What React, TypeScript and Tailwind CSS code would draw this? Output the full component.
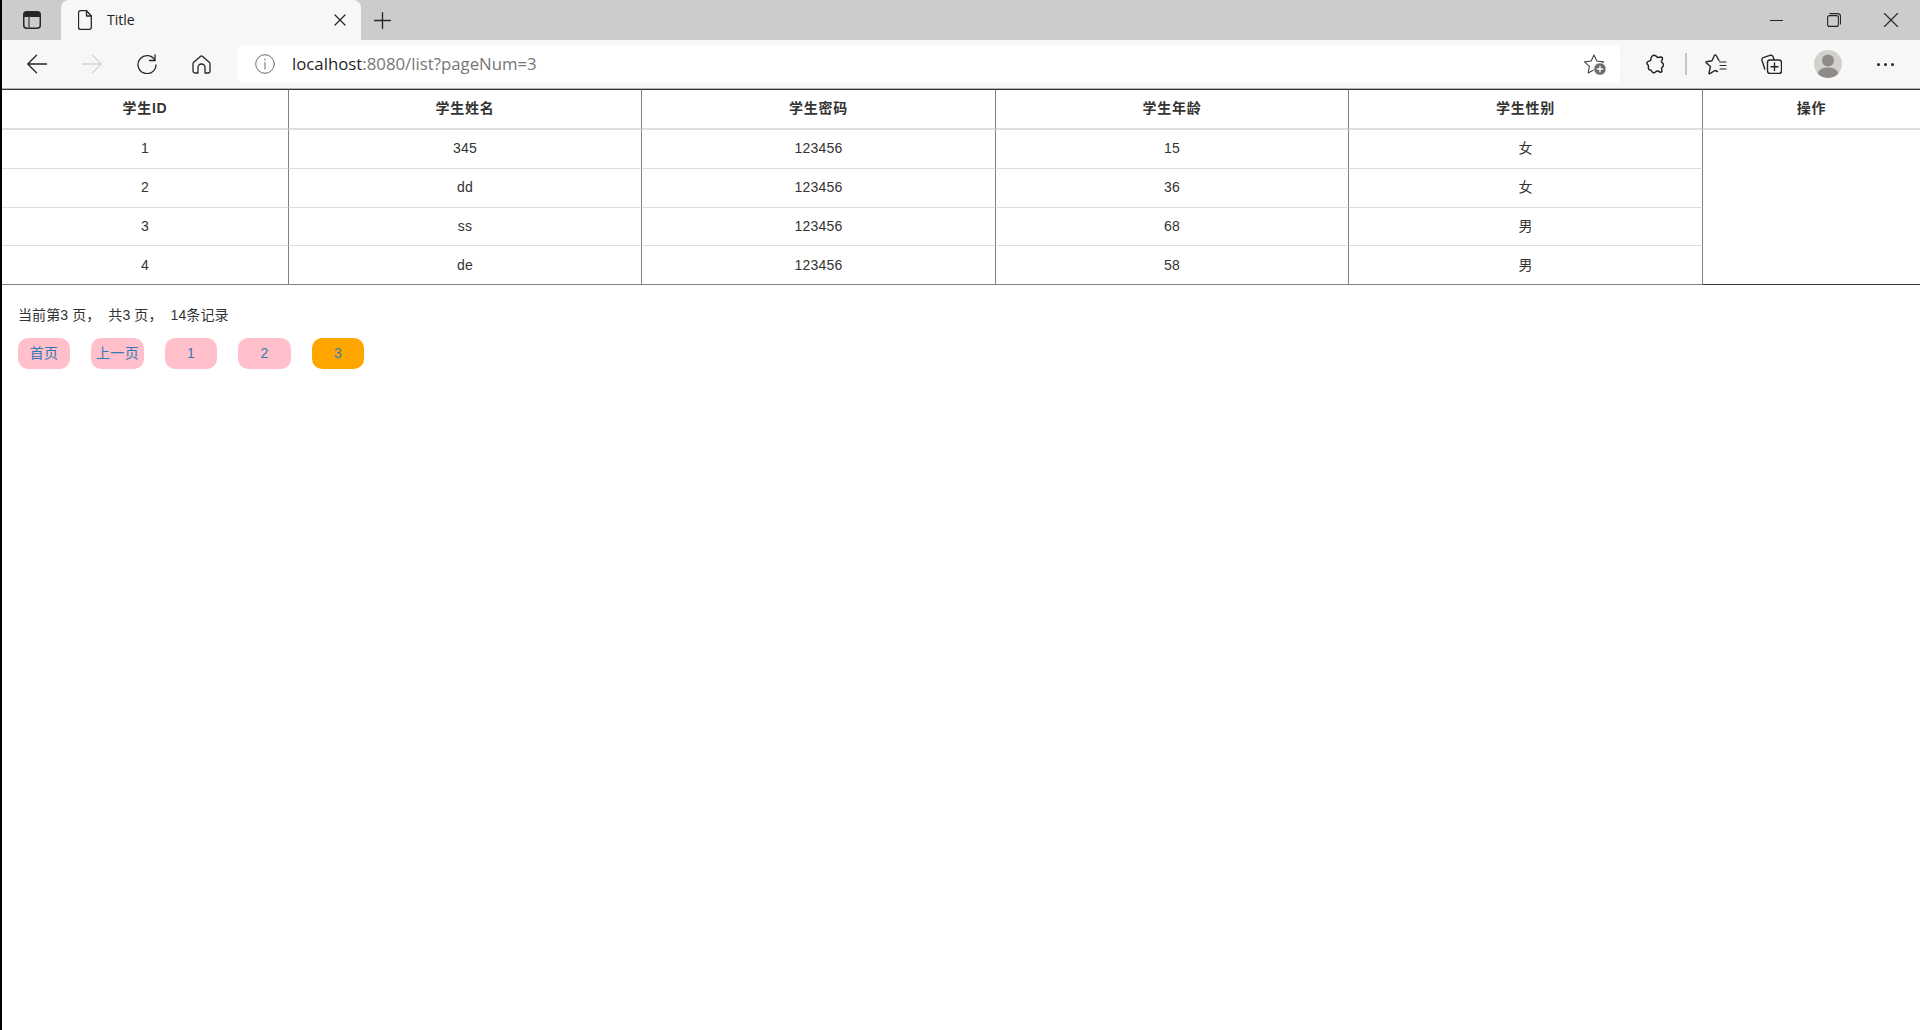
import React from 'react';
import { Plus, X } from 'lucide-react';

const FONT = 'font-["Liberation_Sans","Noto_Sans_CJK_SC",sans-serif]';
const INK = '#262626';

interface Student {
  id: number;
  name: string;
  password: string;
  age: number;
  gender: string;
}

const students: Student[] = [
  { id: 1, name: '345', password: '123456', age: 15, gender: '女' },
  { id: 2, name: 'dd', password: '123456', age: 36, gender: '女' },
  { id: 3, name: 'ss', password: '123456', age: 68, gender: '男' },
  { id: 4, name: 'de', password: '123456', age: 58, gender: '男' },
];

const rowHeights = ['h-[39px] pb-[2px]', 'h-[39px] pb-[2px]', 'h-[38px]', 'h-[39px]'];

const headers = ['学生ID', '学生姓名', '学生密码', '学生年龄', '学生性别'];

const pages = [
  { label: '首页', width: 'w-[52px]', active: false },
  { label: '上一页', width: 'w-[53px]', active: false },
  { label: '1', width: 'w-[52px]', active: false },
  { label: '2', width: 'w-[53px]', active: false },
  { label: '3', width: 'w-[52px]', active: true },
];

const ToolButton: React.FC<{ className: string; children: React.ReactNode }> = ({ className, children }) => (
  <div className={`flex h-full shrink-0 items-center justify-center ${className}`}>{children}</div>
);

// viewBox is in real pixels, so paths can be read straight off the screenshot
const Icon: React.FC<{ w: number; h: number; color?: string; stroke?: number; children: React.ReactNode }> = ({
  w,
  h,
  color = INK,
  stroke = 1.3,
  children,
}) => (
  <svg
    width={w}
    height={h}
    viewBox={`0 0 ${w} ${h}`}
    fill="none"
    stroke={color}
    strokeWidth={stroke}
    strokeLinecap="round"
    strokeLinejoin="round"
  >
    {children}
  </svg>
);

const BrowserChrome: React.FC = () => (
  <div className="font-['Open_Sans',sans-serif]">
    <div className="flex h-[40px] items-end bg-[#cccccc]">
      <ToolButton className="w-[59px]">
        <Icon w={18} h={18} stroke={1.5}>
          <rect x="0.75" y="0.75" width="16.5" height="16.5" rx="3" />
          <path d="M1 2.5a2 2 0 0 1 2-2h12a2 2 0 0 1 2 2V6H1z" fill={INK} stroke="none" />
          <path d="M6 6v11" stroke="#555" />
        </Icon>
      </ToolButton>
      <div className="flex h-[40px] w-[300px] items-center rounded-t-[8px] bg-[#f7f7f7] pr-[11px] pl-[17px]">
        <Icon w={14} h={20}>
          <path d="M2.500 0.700h6l4.800 5.300v11.300a2 2 0 0 1-2 2h-8.800a2 2 0 0 1-2-2V2.700a2 2 0 0 1 2-2z" />
          <path d="M8.500 0.700v5.300h4.800" />
        </Icon>
        <span className="ml-[15px] flex-1 pb-[2px] text-[14px] text-[#222]">Title</span>
        <X size={20} strokeWidth={1.5} color={INK} />
      </div>
      <ToolButton className="w-[43px]">
        <Plus size={27} strokeWidth={1.2} color={INK} />
      </ToolButton>
      <div className="flex-1" />
      <ToolButton className="w-[57px]">
        <div className="h-px w-[13px] bg-[#262626]" />
      </ToolButton>
      <ToolButton className="w-[57px]">
        <Icon w={14} h={14} stroke={1.1}>
          <rect x="0.600" y="2.600" width="10.800" height="10.800" rx="2" />
          <path d="M3 0.600h7.500a3 3 0 0 1 3 3V11" />
        </Icon>
      </ToolButton>
      <ToolButton className="w-[58px]">
        <X size={26} strokeWidth={1} color={INK} />
      </ToolButton>
    </div>
    <div className="flex h-[49px] items-center border-b border-[#b5b5b5] bg-[#f7f7f7] pl-[7px]">
      <ToolButton className="w-[55px]">
        <Icon w={20} h={20}>
          <path d="M19.500 10H1M9.500 1.200 0.800 10l8.700 8.800" />
        </Icon>
      </ToolButton>
      <ToolButton className="w-[55px]">
        <Icon w={20} h={20} color="#d4d4d4">
          <path d="M0.500 10H19M10.500 1.200 19.200 10l-8.700 8.800" />
        </Icon>
      </ToolButton>
      <ToolButton className="w-[55px]">
        <Icon w={20} h={20}>
          <path d="M18 6.500A9 9 0 1 0 19 11" />
          <path d="M18 1v5.500h-5.500" />
        </Icon>
      </ToolButton>
      <ToolButton className="w-[55px]">
        <Icon w={19} h={19}>
          <path d="M8.700 1.300a1.200 1.200 0 0 1 1.600 0l7 6a2 2 0 0 1 .7 1.500V16a2 2 0 0 1-2 2H13v-5.500a3.500 3.500 0 0 0-7 0V18H3a2 2 0 0 1-2-2V8.800a2 2 0 0 1 .7-1.500z" />
        </Icon>
      </ToolButton>
      <div className="ml-[8px] flex h-[38px] w-[1383px] items-center rounded-[6px] bg-white pr-[13px] pl-[18px]">
        <Icon w={20} h={20} color="#6a6a6a" stroke={1}>
          <circle cx="10" cy="10" r="9.300" />
          <path d="M10 8.500v6.500M10 5v1" />
        </Icon>
        <span className="ml-[17px] flex-1 text-[16.8px] text-[#1f1f1f]">
          localhost<span className="text-[#767676]">:8080/list?pageNum=3</span>
        </span>
        <Icon w={23} h={21} color="#444" stroke={1.1}>
          <path d="M10 1l2.800 6 6.700.9-4.900 4.500 1.200 6.600-5.800-3.300-5.800 3.300 1.200-6.600L0.500 7.900 7.200 7z" />
          <circle cx="16" cy="15" r="6.200" fill="#6a6a6a" stroke="#fff" strokeWidth="0.800" />
          <path d="M16 12.300v5.400M13.300 15h5.400" stroke="#fff" strokeWidth="1.400" />
        </Icon>
      </div>
      <ToolButton className="ml-[7px] w-[56px]">
        <Icon w={18} h={20} stroke={1.5}>
          <path d="M5 5C5 2.500 7 .8 9 1.500 10.500 2 11 3 11.500 3.500L15 3C16 3 16.500 4 16.500 5L15.500 7C15 8.500 17.500 9 17.500 11 17.500 13 15.500 13 15.500 14.500L16 17C16 18 15 18.500 14 18L11.500 17C10 16.500 9.500 19 7.500 18.800 5.500 18.600 6 16 4.500 16L3 15.500C2 15 2.500 13 2.500 12 2.500 11 .8 10.500 .8 9 .8 7.500 2.500 7.300 3.500 7 4.500 6.700 5 6 5 5Z" />
        </Icon>
      </ToolButton>
      <div className="ml-[2px] h-[22px] w-[2px] shrink-0 bg-[#c4c4c4]" />
      <ToolButton className="w-[58px]">
        <Icon w={22} h={21} stroke={1.4}>
          <path d="M14 6.500 11.200 1.500a1 1 0 0 0-1.800 0L7 6.800 1.500 7.700a.6.6 0 0 0-.3 1L5.500 12.500 4 19a.6.6 0 0 0 .9.600L10 16.500l2.500 1" />
          <path d="M14.500 8H21M15 11.500h6M15 15h6" strokeWidth="1.200" />
        </Icon>
      </ToolButton>
      <ToolButton className="w-[52px]">
        <Icon w={21} h={20} stroke={1.4}>
          <rect x="6.500" y="6" width="14" height="13.500" rx="2.500" />
          <path d="M13.500 9v7.500M10 12.750h7" />
          <path d="M3.800 15 1 6.500C.6 5 1.400 3.800 2.800 3.400L9 1.300C10.500.9 11.600 1.500 12.200 3L13 5.500" />
        </Icon>
      </ToolButton>
      <ToolButton className="w-[62px]">
        <div className="h-[28px] w-[28px] overflow-hidden rounded-full bg-[#d3d1cd]">
          <svg width="28" height="28" viewBox="0 0 28 28" fill="#8e8a86">
            <circle cx="14" cy="10.500" r="6" />
            <path d="M3.500 25c0-5 4.500-7.500 10.500-7.500s10.500 2.500 10.500 7.500c-2.500 2-6 3-10.500 3s-8-1-10.500-3z" />
          </svg>
        </div>
      </ToolButton>
      <ToolButton className="w-[52px] gap-[4px]">
        <div className="h-[3px] w-[3px] rounded-full bg-[#262626]" />
        <div className="h-[3px] w-[3px] rounded-full bg-[#262626]" />
        <div className="h-[3px] w-[3px] rounded-full bg-[#262626]" />
      </ToolButton>
    </div>
  </div>
);

const StudentTable: React.FC = () => (
  <table className="w-full table-fixed border-separate border-spacing-0 text-center text-[14px] tracking-[0.2px] text-[#333333]">
    <colgroup>
      <col className="w-[287px]" />
      <col className="w-[353px]" />
      <col className="w-[354px]" />
      <col className="w-[353px]" />
      <col className="w-[354px]" />
      <col />
    </colgroup>
    <thead>
      <tr className="h-[41px]">
        {headers.map((h) => (
          <th
            key={h}
            className="border-t border-r border-b-2 border-t-[#333333] border-r-[#808080] border-b-[#dddddd] pb-[2px] font-bold tracking-[0.7px]"
          >
            {h}
          </th>
        ))}
        <th className="border-t border-b-2 border-t-[#333333] border-b-[#dddddd] pb-[2px] font-bold tracking-[0.7px]">操作</th>
      </tr>
    </thead>
    <tbody>
      {students.map((s, i) => {
        const line = i === students.length - 1 ? 'border-b-[#808080]' : 'border-b-[#dddddd]';
        const cell = `border-r border-b border-r-[#808080] ${line} ${rowHeights[i]}`;
        return (
          <tr key={s.id}>
            <td className={cell}>{s.id}</td>
            <td className={cell}>{s.name}</td>
            <td className={cell}>{s.password}</td>
            <td className={cell}>{s.age}</td>
            <td className={cell}>{s.gender}</td>
            {i === 0 && <td rowSpan={4} className="border-b border-b-[#333333]" />}
          </tr>
        );
      })}
    </tbody>
  </table>
);

const Pagination: React.FC = () => (
  <div className="pt-[20px] pl-[16px] text-[14px] text-[#333333]">
    <p className="h-[20px] leading-[20px] tracking-[0.1px]">当前第3 页，&nbsp; 共3 页，&nbsp; 14条记录</p>
    <div className="mt-[13px] flex gap-[21px]">
      {pages.map((p) => (
        <a
          key={p.label}
          className={`flex h-[31px] items-center justify-center rounded-[10px] tracking-[0.3px] text-[#337ab7] ${p.width} ${p.active ? 'bg-[#ffa500]' : 'bg-[#ffc0cb]'}`}
        >
          {p.label}
        </a>
      ))}
    </div>
  </div>
);

export default function App() {
  return (
    <div className={`flex min-h-[1030px] bg-white ${FONT}`}>
      <div className="w-[2px] shrink-0 bg-black" />
      <div className="min-w-0 flex-1">
        <BrowserChrome />
        <StudentTable />
        <Pagination />
      </div>
    </div>
  );
}
